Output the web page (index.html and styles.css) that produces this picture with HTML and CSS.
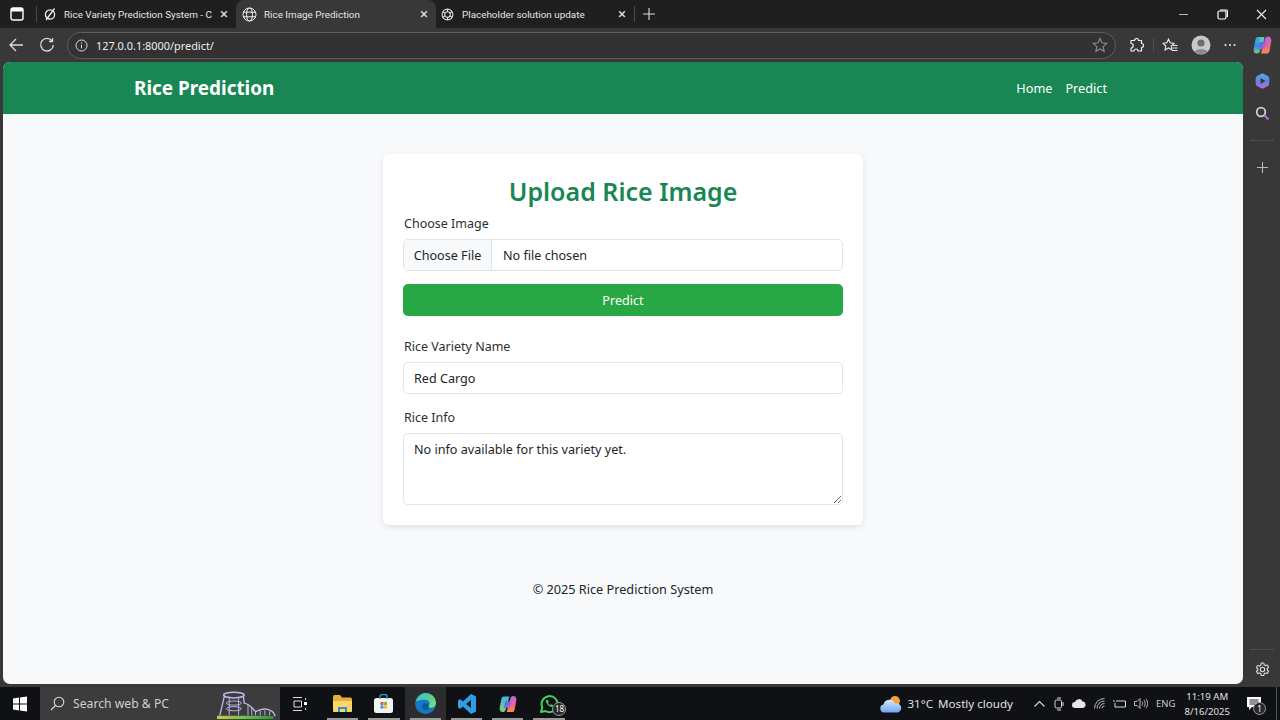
FILE: index.html
```html
<!DOCTYPE html>
<html lang="en">
<head>
<meta charset="utf-8">
<title>Rice Image Prediction</title>
<link rel="stylesheet" href="styles.css">
</head>
<body>
<div class="tabstrip">
  <svg class="win-tabs" width="14" height="14" viewBox="0 0 14 14"><rect x="1" y="1" width="12" height="12" rx="2" fill="none" stroke="#fff" stroke-width="1.4"/><rect x="1" y="1" width="12" height="3.5" fill="#fff"/></svg>
  <div class="strip-sep"></div>
  <div class="tab tab-first">
    <svg class="tab-icon" width="14" height="14" viewBox="0 0 14 14"><circle cx="7" cy="7.5" r="4.6" fill="none" stroke="#eee" stroke-width="1.3"/><path d="M3 13 11.5 1.5" stroke="#eee" stroke-width="1.3"/></svg>
    <span class="tab-title">Rice Variety Prediction System - C</span>
    <span class="tab-close">×</span>
  </div>
  <div class="tab tab-active">
    <svg class="tab-icon" width="15" height="15" viewBox="0 0 15 15" fill="none" stroke="#eee" stroke-width="1"><circle cx="7.5" cy="7.5" r="6.5"/><ellipse cx="7.5" cy="7.5" rx="3" ry="6.5"/><path d="M1 5.2h13M1 9.8h13"/></svg>
    <span class="tab-title">Rice Image Prediction</span>
    <span class="tab-close">×</span>
  </div>
  <div class="tab tab-third">
    <svg class="tab-icon" width="13" height="13" viewBox="0 0 14 14" fill="none" stroke="#ddd" stroke-width="1.2"><circle cx="7" cy="7" r="5.8"/><circle cx="7" cy="7" r="3"/><path d="M7 1.2v3M12 4l-2.500 1.500M12 10 9.500 8.500M7 12.800v-3M2 10l2.500-1.500M2 4l2.500 1.500"/></svg>
    <span class="tab-title">Placeholder solution update</span>
    <span class="tab-close">×</span>
  </div>
  <div class="strip-sep"></div>
  <svg class="new-tab" width="14" height="14" viewBox="0 0 14 14"><path d="M7 1v12M1 7h12" stroke="#ddd" stroke-width="1.1"/></svg>
  <div class="win-controls">
    <svg width="11" height="11" viewBox="0 0 11 11"><path d="M1 5.500h9" stroke="#bbb"/></svg>
    <svg width="11" height="11" viewBox="0 0 11 11" fill="none" stroke="#fff" stroke-width="1.200"><rect x="1" y="2" width="8" height="8" rx="1.500"/><path d="M3 1h6a1.500 1.500 0 0 1 1.500 1.500V8"/></svg>
    <svg width="11" height="11" viewBox="0 0 11 11"><path d="M1 1l9 9M10 1l-9 9" stroke="#eee" stroke-width="1.100"/></svg>
  </div>
</div>

<div class="toolbar">
  <svg class="tool-back" width="16" height="16" viewBox="0 0 16 16" fill="none" stroke="#ddd" stroke-width="1.300"><path d="M15 8H2M8 2 2 8l6 6"/></svg>
  <svg class="tool-reload" width="16" height="16" viewBox="0 0 16 16" fill="none" stroke="#ddd" stroke-width="1.300"><path d="M13 3.800A6.300 6.300 0 1 0 14.300 8M13.500 1v3.500H10"/></svg>
  <div class="address">
    <svg width="13" height="13" viewBox="0 0 13 13" fill="none" stroke="#ddd"><circle cx="6.500" cy="6.500" r="5.500"/><path d="M6.500 5.800v3.600M6.500 3.400v1.200"/></svg>
    <span class="url">127.0.0.1:8000/predict/</span>
    <svg class="addr-star" width="16" height="16" viewBox="0 0 16 16" fill="none" stroke="#8a8a8a" stroke-width="1.200"><path d="M8 1.500l2 4.300 4.700.6-3.500 3.200.9 4.700L8 12l-4.100 2.300.9-4.700L1.300 6.400 6 5.800z"/></svg>
  </div>
  <div class="tool-actions">
    <svg width="15" height="15" viewBox="0 0 15 15" fill="none" stroke="#eee" stroke-width="1.200"><path d="M5.500 2.500a2 2 0 0 1 4 0h3v3a2 2 0 0 1 0 4v3.500H9a2 2 0 0 0-4 0H2V10a2 2 0 0 0 0-4.500V2.500z" stroke-linejoin="round"/></svg>
    <div class="tool-sep"></div>
    <svg width="16" height="15" viewBox="0 0 16 15" fill="none" stroke="#eee" stroke-width="1.100"><path d="M6.500 1.200l1.700 3.600 3.800.5-2.800 2.700.7 3.900-3.400-1.900-3.400 1.900.7-3.900L1 5.300l3.800-.5zM11 7.500h4.500M10.500 10h5M10 12.500h5.500"/></svg>
    <svg class="avatar" width="20" height="20" viewBox="0 0 20 20"><circle cx="10" cy="10" r="9.500" fill="#c8c8c8"/><circle cx="10" cy="8" r="3.600" fill="#6d6d6d"/><path d="M3.500 16.500c1.500-3.500 11.500-3.500 13 0A9.500 9.500 0 0 1 3.500 16.500z" fill="#8a8a8a"/></svg>
    <svg width="12" height="4" viewBox="0 0 12 4" fill="#eee"><circle cx="1.500" cy="2" r="1"/><circle cx="6" cy="2" r="1"/><circle cx="10.500" cy="2" r="1"/></svg>
    <svg class="copilot" width="19" height="18" viewBox="0 0 19 18">
      <defs>
        <linearGradient id="cpA" x1="0" y1="0" x2="0" y2="1"><stop offset="0" stop-color="#35b6e8"/><stop offset=".55" stop-color="#2f8fe8"/><stop offset="1" stop-color="#7bd26a"/></linearGradient>
        <linearGradient id="cpB" x1="0" y1="0" x2="0" y2="1"><stop offset="0" stop-color="#b46be0"/><stop offset=".5" stop-color="#ec5f9e"/><stop offset="1" stop-color="#f9913c"/></linearGradient>
        <linearGradient id="cpC" x1="0" y1="0" x2="1" y2="1"><stop offset="0" stop-color="#3c6fe6"/><stop offset="1" stop-color="#c45fd0"/></linearGradient>
      </defs>
      <path d="M5 1h6L7 15c-.4 1.500-1.500 2.500-3 2.500C1.500 17.500.3 15.500.7 13L2.500 3.500C2.800 2 3.700 1 5 1z" fill="url(#cpA)"/>
      <path d="M14 17.500H8L12 3c.4-1.500 1.500-2.500 3-2.500 2.500 0 3.700 2.300 3.300 4.500L16.500 15c-.3 1.500-1.200 2.500-2.500 2.500z" fill="url(#cpB)"/>
      <path d="M7.500 1h4l-1 6H6z" fill="#5bc8a8"/>
      <path d="M7 6h6l-2 7H5z" fill="url(#cpC)"/>
    </svg>
  </div>
</div>

<div class="middle">
  <div class="page">
    <nav class="navbar">
      <a class="brand">Rice Prediction</a>
      <div class="nav-links"><a>Home</a><a>Predict</a></div>
    </nav>
    <main class="main">
      <section class="card">
        <h2 class="card-title">Upload Rice Image</h2>
        <form class="form">
          <label class="label label-first">Choose Image</label>
          <input class="field file" type="file">
          <button class="btn" type="button">Predict</button>
          <label class="label label-name">Rice Variety Name</label>
          <input class="field" type="text" value="Red Cargo">
          <label class="label label-info">Rice Info</label>
          <textarea class="field area">No info available for this variety yet.</textarea>
        </form>
      </section>
      <footer class="footer">© 2025 Rice Prediction System</footer>
    </main>
  </div>
  <aside class="sidebar">
    <svg class="side-drop" width="15" height="16" viewBox="0 0 15 16">
      <defs><linearGradient id="dr" x1="0" y1="0" x2="0" y2="1"><stop offset="0" stop-color="#3fb4e8"/><stop offset=".5" stop-color="#6a7fe2"/><stop offset="1" stop-color="#b06fdc"/></linearGradient></defs>
      <path d="M7.500 .5c1 0 6 2.800 6.500 3.600.5.800.5 7 0 7.800-.5.800-5.500 3.600-6.500 3.600S1.500 12.700 1 11.900c-.5-.8-.5-7 0-7.800C1.500 3.300 6.500.5 7.500.5z" fill="url(#dr)"/>
      <path d="M5.500 5l5 3-5 3z" fill="#38383a"/>
    </svg>
    <svg class="side-search" width="15" height="15" viewBox="0 0 15 15" fill="none"><circle cx="6" cy="6" r="4.300" stroke="#cfcfcf" stroke-width="1.800"/><path d="M9.500 9.500l4 4" stroke="#a96fd6" stroke-width="2.200"/></svg>
    <div class="side-sep"></div>
    <svg class="side-plus" width="11" height="11" viewBox="0 0 11 11"><path d="M5.500 0v11M0 5.500h11" stroke="#bbb"/></svg>
    <div class="side-sep side-sep-bottom"></div>
    <svg class="side-gear" width="15" height="15" viewBox="0 0 15 15" fill="none" stroke="#ddd" stroke-width="1.100"><circle cx="7.500" cy="7.500" r="2.200"/><path d="M6.200 1h2.600l.4 1.900 1.300.7 1.800-.6 1.300 2.200-1.400 1.300v1.500l1.400 1.300-1.300 2.200-1.800-.6-1.300.7-.4 1.900H6.200l-.4-1.900-1.300-.7-1.800.6-1.300-2.200L2.800 8.500V7L1.400 5.700l1.300-2.200 1.800.6 1.300-.7z" stroke-linejoin="round"/></svg>
  </aside>
</div>

<div class="taskbar">
  <svg class="start" width="16" height="16" viewBox="0 0 16 16" fill="#fff"><path d="M1 2.500l6-.9V7.500H1zM8 1.400l7-1V7.500H8zM1 8.500h6v5.900l-6-.9zM8 8.500h7v7l-7-1z"/></svg>
  <div class="search">
    <svg width="15" height="15" viewBox="0 0 15 15" fill="none" stroke="#ddd" stroke-width="1.100"><circle cx="9" cy="6" r="4.800"/><path d="M5.500 9.500 1 14"/></svg>
    <span class="search-text">Search web &amp; PC</span>
    <svg class="search-art" width="62" height="31" viewBox="0 0 66 31" fill="none" stroke="#bcb8ec" stroke-width="1">
      <defs><linearGradient id="gr" x1="0" y1="0" x2="1" y2="0"><stop offset="0" stop-color="#c9c94a"/><stop offset=".5" stop-color="#6fbf4c"/><stop offset="1" stop-color="#2f8f3c"/></linearGradient></defs>
      <ellipse cx="18" cy="5.500" rx="11" ry="3" stroke-width="1.600"/>
      <path d="M8 6 3 27M28 6l1 8c6 1 8 5 12 9 4-2 11-4 16-1 3 1 4 3 5 6" stroke-width="1.400"/>
      <ellipse cx="18" cy="14" rx="8" ry="2.200"/><ellipse cx="18" cy="20" rx="8" ry="2.200"/>
      <path d="M13 8v19M23 8v19M33 15v12M37 18v9M41 23v4M46 22v5M51 22v5M56 23v4"/>
      <rect x="0" y="27.500" width="60" height="3.500" fill="url(#gr)" stroke="none"/>
    </svg>
  </div>
  <svg class="task-view" width="14" height="16" viewBox="0 0 14 16" fill="none" stroke="#ddd"><path d="M0 1.500h9M0 14.500h9M1 5h7.500v6H1zM12.500 2v2M12.500 12v2"/><rect x="11" y="6" width="3" height="3" fill="#fff" stroke="none"/></svg>
  <div class="task-item">
    <svg width="19" height="17" viewBox="0 0 19 17"><path d="M0 1.500A1.500 1.500 0 0 1 1.500 0H7l2 2.500h8.500A1.500 1.500 0 0 1 19 4v11.500a1.500 1.500 0 0 1-1.500 1.500h-16A1.500 1.500 0 0 1 0 15.500z" fill="#e8ac38"/><path d="M0 6h19v9.500a1.500 1.500 0 0 1-1.500 1.500h-16A1.500 1.500 0 0 1 0 15.500z" fill="#fbd56a"/><path d="M5 17v-5h9v5h-2v-3H7v3z" fill="#2f8fd0"/></svg>
    <span class="under"></span>
  </div>
  <div class="task-item">
    <svg width="19" height="19" viewBox="0 0 19 19"><rect x="0" y="4" width="19" height="15" rx="2.500" fill="#f2f2f2"/><path d="M6 5V2.500a2 2 0 0 1 2-2h3a2 2 0 0 1 2 2V5" fill="none" stroke="#2aa0d8" stroke-width="1.300"/><rect x="6.500" y="8" width="3" height="3" fill="#e8502f"/><rect x="10" y="8" width="3" height="3" fill="#7fba2a"/><rect x="6.500" y="11.500" width="3" height="3" fill="#2aa0e0"/><rect x="10" y="11.500" width="3" height="3" fill="#f7b91a"/></svg>
    <span class="under"></span>
  </div>
  <div class="task-item task-active">
    <svg width="21" height="21" viewBox="0 0 20 20">
      <defs><linearGradient id="ed" x1="0" y1="0" x2="1" y2="1"><stop offset="0" stop-color="#33c0c8"/><stop offset="1" stop-color="#7fe06a"/></linearGradient></defs>
      <circle cx="10" cy="10" r="10" fill="#1677c4"/>
      <path d="M.8 8C2.500 2.500 7 0 10 0c5.500 0 10 4 10 9.500 0 3-2.500 4.500-5 4.500-2 0-3.500-.5-4-1.500 2 0 3-1.200 3-2.500C14 8 12 6.500 9.500 6.500 6 6.500 3 7 .8 8z" fill="url(#ed)"/>
      <circle cx="10" cy="13" r="3.200" fill="#0e5aa0"/>
    </svg>
    <span class="under"></span>
  </div>
  <div class="task-item">
    <svg width="18" height="20" viewBox="0 0 18 20"><path d="M13 0 5 7.500 2 5 0 6.500v7L2 15l3-2.500L13 20l5-2.500v-15zM13 6v8L8 10z" fill="#2c9fe5"/></svg>
    <span class="under"></span>
  </div>
  <div class="task-item">
    <svg width="18" height="18" viewBox="0 0 19 18">
      <defs>
        <linearGradient id="cqA" x1="0" y1="0" x2="0" y2="1"><stop offset="0" stop-color="#3db4e8"/><stop offset="1" stop-color="#7bd26a"/></linearGradient>
        <linearGradient id="cqB" x1="0" y1="0" x2="0" y2="1"><stop offset="0" stop-color="#b46be0"/><stop offset=".5" stop-color="#ec5f9e"/><stop offset="1" stop-color="#f9913c"/></linearGradient>
        <linearGradient id="cqC" x1="0" y1="0" x2="1" y2="1"><stop offset="0" stop-color="#3c6fe6"/><stop offset="1" stop-color="#c45fd0"/></linearGradient>
      </defs>
      <path d="M5 1h6L7 15c-.4 1.500-1.500 2.500-3 2.500C1.500 17.500.3 15.500.7 13L2.500 3.500C2.800 2 3.700 1 5 1z" fill="url(#cqA)"/>
      <path d="M14 17.500H8L12 3c.4-1.500 1.500-2.500 3-2.500 2.500 0 3.700 2.300 3.300 4.500L16.500 15c-.3 1.500-1.200 2.500-2.500 2.500z" fill="url(#cqB)"/>
      <path d="M7 6h6l-2 7H5z" fill="url(#cqC)"/>
    </svg>
    <span class="under"></span>
  </div>
  <div class="task-item task-wa">
    <svg width="20" height="20" viewBox="0 0 20 20" fill="none" stroke="#3fd365" stroke-width="2"><path d="M2 18l1.300-4.500A8 8 0 1 1 6.500 17z" stroke-linejoin="round"/><path d="M7 6c-.8 3 3.500 7.500 6.500 6.800l.7-1.600-2-1-.9.900c-1-.3-1.900-1.300-2.300-2.300l.8-.9-.8-2z" fill="#3fd365" stroke="none"/></svg>
    <span class="wa-badge">18</span>
    <span class="under"></span>
  </div>
  <div class="tray">
    <svg class="weather" width="22" height="18" viewBox="0 0 22 18">
      <defs><linearGradient id="cl" x1="0" y1="0" x2="0" y2="1"><stop offset="0" stop-color="#d8e8fb"/><stop offset="1" stop-color="#6fa8f0"/></linearGradient></defs>
      <circle cx="15" cy="6" r="5" fill="#f4a13a"/>
      <path d="M4 17.500A4 4 0 0 1 3.500 9.600 6 6 0 0 1 15 8.500a4.500 4.500 0 0 1 3 9z" fill="url(#cl)"/>
    </svg>
    <span class="temp">31°C</span>
    <span class="cond">Mostly cloudy</span>
    <svg class="chev" width="11" height="7" viewBox="0 0 11 7" fill="none" stroke="#ddd" stroke-width="1.100"><path d="M.5 6.500l5-5 5 5"/></svg>
    <svg width="10" height="14" viewBox="0 0 10 14" fill="none" stroke="#ddd"><rect x="1" y="3" width="6.500" height="8" rx="1.500"/><path d="M3 1h4M3 13h4M9 5v4"/></svg>
    <svg width="14" height="9" viewBox="0 0 14 9"><path d="M3 9a3 3 0 0 1 0-6 4 4 0 0 1 7.500-.5A3.300 3.300 0 0 1 11 9z" fill="#e6e6e6"/></svg>
    <svg width="11" height="11" viewBox="0 0 11 11" fill="none" stroke="#bbb"><path d="M.5 10.500A10 10 0 0 1 10.500.5M3 10.500A7.500 7.500 0 0 1 10.500 3M5.500 10.500a5 5 0 0 1 5-5M8 10.500a2.500 2.500 0 0 1 2.500-2.500"/></svg>
    <svg width="14" height="9" viewBox="0 0 14 9" fill="none" stroke="#ddd"><path d="M3 2h9.500v6H2V4M0 1.500l2 1"/></svg>
    <svg class="sound" width="14" height="11" viewBox="0 0 14 11" fill="none" stroke="#bbb"><path d="M.5 3.500h2.500L6 .5v10l-3-3H.5zM8 3.500c.8 1 .8 3 0 4M10 2c1.500 2 1.500 5 0 7M12 .8c2 2.500 2 7 0 9.500"/></svg>
    <span class="lang">ENG</span>
    <div class="clock"><span>11:19 AM</span><span>8/16/2025</span></div>
    <div class="notif">
      <svg width="14" height="14" viewBox="0 0 14 14"><path d="M0 0h14v10H5l-3 3v-3H0z" fill="#fff"/><path d="M2.500 3h9M2.500 5h9M2.500 7h6" stroke="#222"/></svg>
      <span class="notif-badge">1</span>
    </div>
    <div class="show-desktop"></div>
  </div>
</div>
</body>
</html>
```

FILE: styles.css
```css
* { box-sizing: border-box; }
html, body { margin: 0; height: 720px; overflow: hidden; }
body {
  display: flex;
  flex-direction: column;
  background: #383838;
  font-family: "Noto Sans", "Open Sans", sans-serif;
  color: #212529;
}
svg { flex: none; display: block; }

/* browser tab strip */
.tabstrip {
  height: 28px;
  flex: none;
  background: #1f1f1f;
  display: flex;
  align-items: center;
  color: #e6e6e6;
  font-family: Roboto, "Noto Sans", sans-serif;
  font-size: 9.9px;
}
.win-tabs { margin-left: 10px; margin-right: 12px; }
.strip-sep { width: 1px; height: 16px; background: #4a4a4a; }
.tab {
  height: 28px;
  flex: none;
  display: flex;
  align-items: center;
}
.tab-first { width: 199px; padding-left: 6px; }
.tab-active { width: 200px; background: #383838; border-radius: 8px 8px 0 0; padding-left: 6px; }
.tab-third { width: 198px; padding-left: 5px; }
.tab-icon { margin-right: 7px; }
.tab-third .tab-icon { margin-right: 8px; }
.tab-title { flex: 1; white-space: nowrap; overflow: hidden; }
.tab-close { width: 20px; flex: none; text-align: center; font-size: 15px; line-height: 1; color: #ddd; margin-right: 2px; }
.new-tab { margin-left: 7px; }
.win-controls { margin-left: auto; display: flex; gap: 28px; padding-right: 13px; align-items: center; }

/* browser toolbar */
.toolbar {
  height: 34px;
  flex: none;
  background: #383838;
  display: flex;
  align-items: center;
  color: #eee;
}
.tool-back { margin-left: 8px; }
.tool-reload { margin-left: 15px; }
.address {
  margin-left: 12px;
  width: 1049px;
  height: 27px;
  flex: none;
  border: 1px solid #5e5e5e;
  border-radius: 14px;
  background: #323232;
  display: flex;
  align-items: center;
  padding: 0 7px;
}
.url { margin-left: 8px; font-size: 10.9px; flex: 1; }
.tool-actions { display: flex; align-items: center; margin-left: 13px; }
.tool-sep { width: 1px; height: 14px; background: #505050; margin: 0 8px 0 9px; }
.avatar { margin-left: 13px; margin-right: 13px; }
.copilot { margin-left: 17px; }

/* middle: page + sidebar */
.middle { height: 622px; flex: none; display: flex; padding-left: 3px; }
.page {
  width: 1240px;
  flex: none;
  background: #f8f9fa;
  border-radius: 7px;
  overflow: hidden;
  display: flex;
  flex-direction: column;
}
.navbar {
  height: 52px;
  flex: none;
  background: #198754;
  color: #fff;
  display: flex;
  align-items: center;
  justify-content: space-between;
  padding: 0 136px 0 131px;
}
.brand { font-size: 18.9px; font-weight: 700; }
.nav-links { display: flex; gap: 13px; font-size: 12.7px; }
.main { flex: 1; display: flex; flex-direction: column; align-items: center; padding-top: 40px; }
.card {
  width: 480px;
  height: 371px;
  background: #fff;
  border-radius: 6px;
  box-shadow: 0 2px 6px rgba(0, 0, 0, .1);
  padding: 20px;
}
.card-title {
  margin: 0 0 1px;
  text-align: center;
  color: #198754;
  font-size: 25px;
  font-weight: 600;
  line-height: 35px;
}
.form { display: flex; flex-direction: column; }
.label { font-size: 12.5px; color: #2b2f33; padding-left: 1px; }
.label-first { margin: 4px 0 3px; height: 22px; line-height: 20px; }
.label-name { margin-top: 21px; height: 25px; line-height: 20px; }
.label-info { margin-top: 13px; height: 26px; line-height: 22px; }
.field {
  display: block;
  width: 100%;
  height: 32px;
  border: 1px solid #e2e5e8;
  border-radius: 5px;
  background: #fff;
  padding: 0 10px;
  font: 12.6px "Noto Sans", "Open Sans", sans-serif;
  color: #212529;
  outline: none;
}
.file { padding: 0; overflow: hidden; line-height: 30px; }
.file::file-selector-button {
  height: 30px;
  width: 88px;
  margin: 0 11px 0 0;
  padding: 1px 0 0;
  border: 0;
  border-right: 1px solid #e2e5e8;
  background: #f8f9fa;
  color: #212529;
  font: inherit;
}
.btn {
  margin-top: 13px;
  height: 32px;
  flex: none;
  border: 0;
  border-radius: 5px;
  background: #28a745;
  color: #fff;
  font: 12.6px "Noto Sans", "Open Sans", sans-serif;
}
.area { height: 72px; padding: 6px 10px; line-height: 20px; resize: vertical; }
.footer { margin-top: 55px; font-size: 12.7px; line-height: 18px; text-align: center; color: #212529; }

/* edge sidebar */
.sidebar { flex: 1; display: flex; flex-direction: column; align-items: center; padding-left: 1px; }
.side-drop { margin-top: 11px; }
.side-search { margin-top: 17px; }
.side-sep { width: 24px; height: 1px; background: #4f4f4f; margin-top: 19px; flex: none; }
.side-plus { margin-top: 21px; }
.side-sep-bottom { margin-top: auto; }
.side-gear { margin-top: 12px; margin-bottom: 7px; }

/* windows taskbar */
.taskbar {
  flex: 1;
  margin-top: 3px;
  background: #101114;
  display: flex;
  align-items: stretch;
  color: #e0e0e0;
  font-size: 12.2px;
}
.start { margin: auto 12px; }
.search {
  width: 240px;
  background: #3c3c3c;
  display: flex;
  align-items: center;
  padding-left: 10px;
  position: relative;
}
.search-text { margin-left: 8px; color: #cfcfcf; }
.search-art { position: absolute; right: 1px; bottom: 0; }
.task-view { margin: auto 15px auto 13px; }
.task-item {
  width: 41.3px;
  flex: none;
  display: flex;
  align-items: center;
  justify-content: center;
  position: relative;
}
.task-active { background: #2c2c2e; }
.under { position: absolute; left: 5px; right: 5px; bottom: 0; height: 2px; background: #9a9a9a; }
.wa-badge {
  position: absolute;
  left: 24px;
  top: 15px;
  width: 14px;
  height: 14px;
  border-radius: 50%;
  background: #2a2a2a;
  border: 1px solid #999;
  font-size: 8px;
  line-height: 12px;
  text-align: center;
  color: #fff;
}
.tray { margin-left: auto; display: flex; align-items: center; gap: 8px; padding-right: 3px; }
.weather { margin-right: -3px; }
.temp { font-size: 11.6px; }
.cond { font-size: 11.6px; margin-left: -3px; margin-right: 13px; }
.chev { margin-right: 1px; }
.sound { margin-left: -1px; }
.lang { font-size: 9.5px; color: #c8c8c8; }
.clock { display: flex; flex-direction: column; align-items: center; font-size: 9.6px; line-height: 15px; margin: 0 9px 0 1px; }
.notif { position: relative; width: 24px; height: 24px; display: flex; align-items: center; }
.notif-badge {
  position: absolute;
  left: 6px;
  top: 10px;
  width: 13px;
  height: 13px;
  border-radius: 50%;
  background: #2a2a2a;
  border: 1px solid #999;
  font-size: 8px;
  line-height: 11px;
  text-align: center;
  color: #fff;
}
.show-desktop { width: 1px; align-self: stretch; background: #555; margin-left: -3px; }
```
